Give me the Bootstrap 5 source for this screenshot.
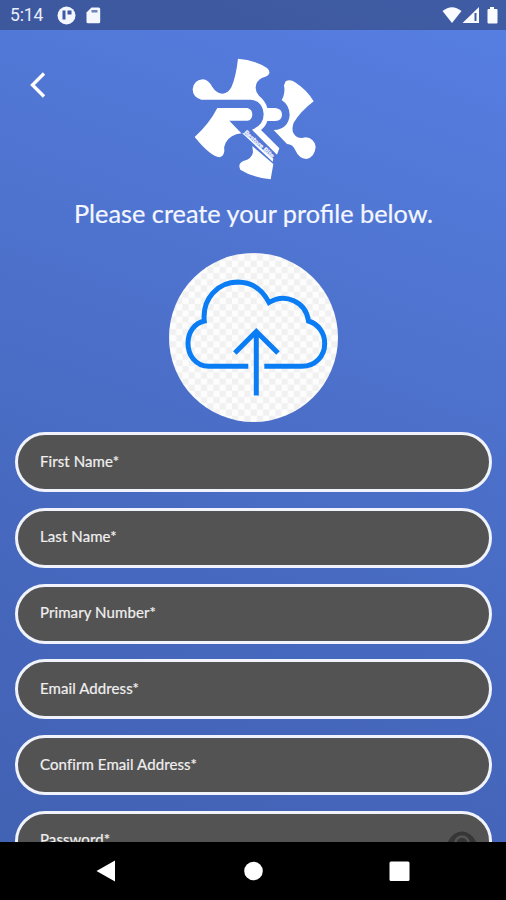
<!DOCTYPE html>
<html lang="en">
<head>
<meta charset="utf-8">
<meta name="viewport" content="width=device-width, initial-scale=1">
<title>Create profile</title>
<link href="https://cdn.jsdelivr.net/npm/bootstrap@5.3.0/dist/css/bootstrap.min.css" rel="stylesheet">
<style>
  body { font-family: Lato, "Open Sans", sans-serif; background: #000; }
  .screen { height: 900px; background: linear-gradient(200deg, #577fe3 0%, #4f74d0 32%, #4668be 65%, #4262b4 92%); }
  .status-bar { height: 30px; background: rgba(30, 40, 70, .4); font: 17.5px/1 Roboto, sans-serif; padding: 1px 7px 0 10px; }
  .status-bar .clock { width: 47px; letter-spacing: -.1px; color: #e9eefb; }
  .page-head { height: 160px; padding: 20px 25px 0; }
  .back-btn { width: 25px; height: 70px; }
  .logo { margin-left: 3px; }
  .page-title { font-size: 25.3px; line-height: 32px; margin: 7px 0 0; padding-left: 1px; white-space: nowrap; color: #f4f7ff; -webkit-text-stroke: .2px #f4f7ff; }
  .avatar { width: 169px; height: 169px; margin: 24px 0 10px; }
  .fields { gap: 15.8px; padding: 0 14px 0 15px; }
  .field { height: 60px; border: 3px solid #f0f3fb; border-radius: 30px; background: #535353; }
  .field .form-control { font-size: 15px; line-height: 20px; padding: 0 0 3px 22px; height: 100%; letter-spacing: .09px; }
  .field .form-control::placeholder { color: #f0f0f0; opacity: 1; -webkit-text-stroke: .2px #f0f0f0; }
  .system-nav { height: 58px; background: #000; }
</style>
</head>
<body>
<div class="screen d-flex flex-column overflow-hidden text-white">
  <header class="status-bar d-flex align-items-center flex-shrink-0">
    <span class="clock">5:14</span>
    <svg width="48" height="22" viewBox="57 5 48 22" fill="#f5f7ff">
      <circle cx="66.500" cy="15.500" r="9"/>
      <path d="M62.500 10.500h3v9h-3z M67.500 10.500h4v4h-4z" fill="#3f5aa4"/>
      <path d="M91.500 7.500h7.200q1.500 0 1.500 1.500v12.700q0 1.500-1.500 1.500H88q-1.500 0-1.500-1.500V12.500z"/>
      <path d="M91.500 10h6v2.500h-6z" fill="#6f83bb"/>
    </svg>
    <svg class="ms-auto" width="60" height="22" viewBox="439 5 60 22" fill="#fafbff">
      <path d="M442.500 11q9.500-7.600 19 0L452 23z"/>
      <path d="M479 7v16h-16.500z"/><path d="M474.500 13h2v8h-2z" fill="#3f5aa4"/>
      <path d="M490 7h4v2h2.500q1 0 1 1v12.500q0 1-1 1h-8q-1 0-1-1V10q0-1 1-1H490z"/>
    </svg>
  </header>

  <main class="d-flex flex-column flex-grow-1 overflow-hidden">
    <div class="page-head d-flex justify-content-between align-items-start flex-shrink-0">
      <button class="back-btn btn p-0 border-0 text-white d-flex align-items-center" type="button" aria-label="Back">
        <svg width="25" height="30" viewBox="25 70 25 30" fill="none" stroke="currentColor" stroke-width="3.300"><path d="M44 73.500L32.500 85 44 96.500"/></svg>
      </button>
      <svg class="logo" width="150" height="140" viewBox="0 0 450 420" fill="#fff" role="img" aria-label="Logo">
        <path d="M174 26Q224 30 262 55Q271 63 267 72Q262 80 247 83Q228 92 227 112Q226 124 237 137Q257 154 262 174H286Q306 176 306 194Q306 212 286 213H262Q257 229 243 240L298 295L291 314L216 239Q251 225 251 192Q248 153 212 149H64Q38 142 38 118Q40 91 68 88Q85 89 97 111Q110 131 128 131Q145 129 154 112Q168 80 174 26Z"/>
        <path d="M112 174H202Q217 178 217 194Q216 210 202 212H148L184 250Q151 254 137 278Q131 288 133 304Q130 320 119 322Q91 319 44 261Q88 221 112 174Z"/>
        <path d="M317 94Q331 87 345 97Q381 120 401 154Q362 184 341 218Q333 240 342 252Q352 268 377 262Q402 264 407 290Q405 321 379 327Q357 326 346 301Q338 282 321 282L281 240Q326 237 329 194Q328 165 305 150Q317 130 312 106Z"/>
        <path d="M217 288L280 342L272 388Q219 383 181 359Q172 341 190 333Q216 327 219 307Z"/>
        <path d="M186 249L192 250L280 326L278 335Z"/>
        <text transform="translate(191 249) rotate(41.500)" font-family="Lato, sans-serif" font-size="18" font-weight="900" textLength="114" lengthAdjust="spacingAndGlyphs" fill="#eef2ff" stroke="#eef2ff" stroke-width=".8">Restore Rite</text>
      </svg>
      <span class="back-btn"></span>
    </div>

    <h1 class="page-title text-center fw-normal">Please create your profile below.</h1>

    <svg class="avatar align-self-center flex-shrink-0" viewBox="169 253.500 169 169" role="img" aria-label="Upload photo">
      <defs><pattern id="checks" x="170" y="255" width="12.400" height="12.400" patternUnits="userSpaceOnUse">
        <path d="M0 0h12.400v12.400H0z" fill="#fdfdfd"/><path d="M0 0h6.200v6.200H0zM6.200 6.200h6.200v6.200H6.200z" fill="#f1f1f1"/>
      </pattern></defs>
      <circle cx="253.500" cy="338" r="84.500" fill="url(#checks)"/>
      <g fill="none" stroke="#0a7cf4" stroke-width="5">
        <path d="M248.300 366.800H209C195 366.800 188 355 188 344C188 332 195 323.500 204.300 321.500C202 299 218 282.500 238 282.500Q259 283 269 303C285 293 306 302 308.500 321.500C318 324.500 324.700 333 324.700 344C324.700 357 315 366.800 302 366.800H264.300"/>
        <path d="M256.300 396V332M234.800 353.500L256.300 332L278 353.500"/>
      </g>
    </svg>

    <form class="fields d-flex flex-column">
      <div class="field flex-shrink-0"><input class="form-control bg-transparent border-0 shadow-none text-white" type="text" placeholder="First Name*"></div>
      <div class="field flex-shrink-0"><input class="form-control bg-transparent border-0 shadow-none text-white" type="text" placeholder="Last Name*"></div>
      <div class="field flex-shrink-0"><input class="form-control bg-transparent border-0 shadow-none text-white" type="tel" placeholder="Primary Number*"></div>
      <div class="field flex-shrink-0"><input class="form-control bg-transparent border-0 shadow-none text-white" type="email" placeholder="Email Address*"></div>
      <div class="field flex-shrink-0"><input class="form-control bg-transparent border-0 shadow-none text-white" type="email" placeholder="Confirm Email Address*"></div>
      <div class="field flex-shrink-0 d-flex">
        <input class="form-control bg-transparent border-0 shadow-none text-white" type="password" placeholder="Password*">
        <svg class="flex-shrink-0 me-2" width="38" height="54" viewBox="443 814 38 54">
          <path d="M447 843Q453 831.500 462 831.500T477 843Q471 854 462 854T447 843Z" fill="#363636"/><circle cx="462" cy="843" r="6.500" fill="#363636" stroke="#535353" stroke-width="2.500"/>
        </svg>
      </div>
    </form>
  </main>

  <nav class="system-nav flex-shrink-0">
    <svg class="d-block" width="506" height="58" viewBox="0 842 506 58" fill="#fff">
      <path d="M96.500 871L115 860.500v21z"/><circle cx="253.500" cy="871" r="9.300"/><rect x="389.500" y="861.500" width="20" height="19.500" rx="1.500"/>
    </svg>
  </nav>
</div>
<script src="https://cdn.jsdelivr.net/npm/bootstrap@5.3.0/dist/js/bootstrap.bundle.min.js"></script>
</body>
</html>
